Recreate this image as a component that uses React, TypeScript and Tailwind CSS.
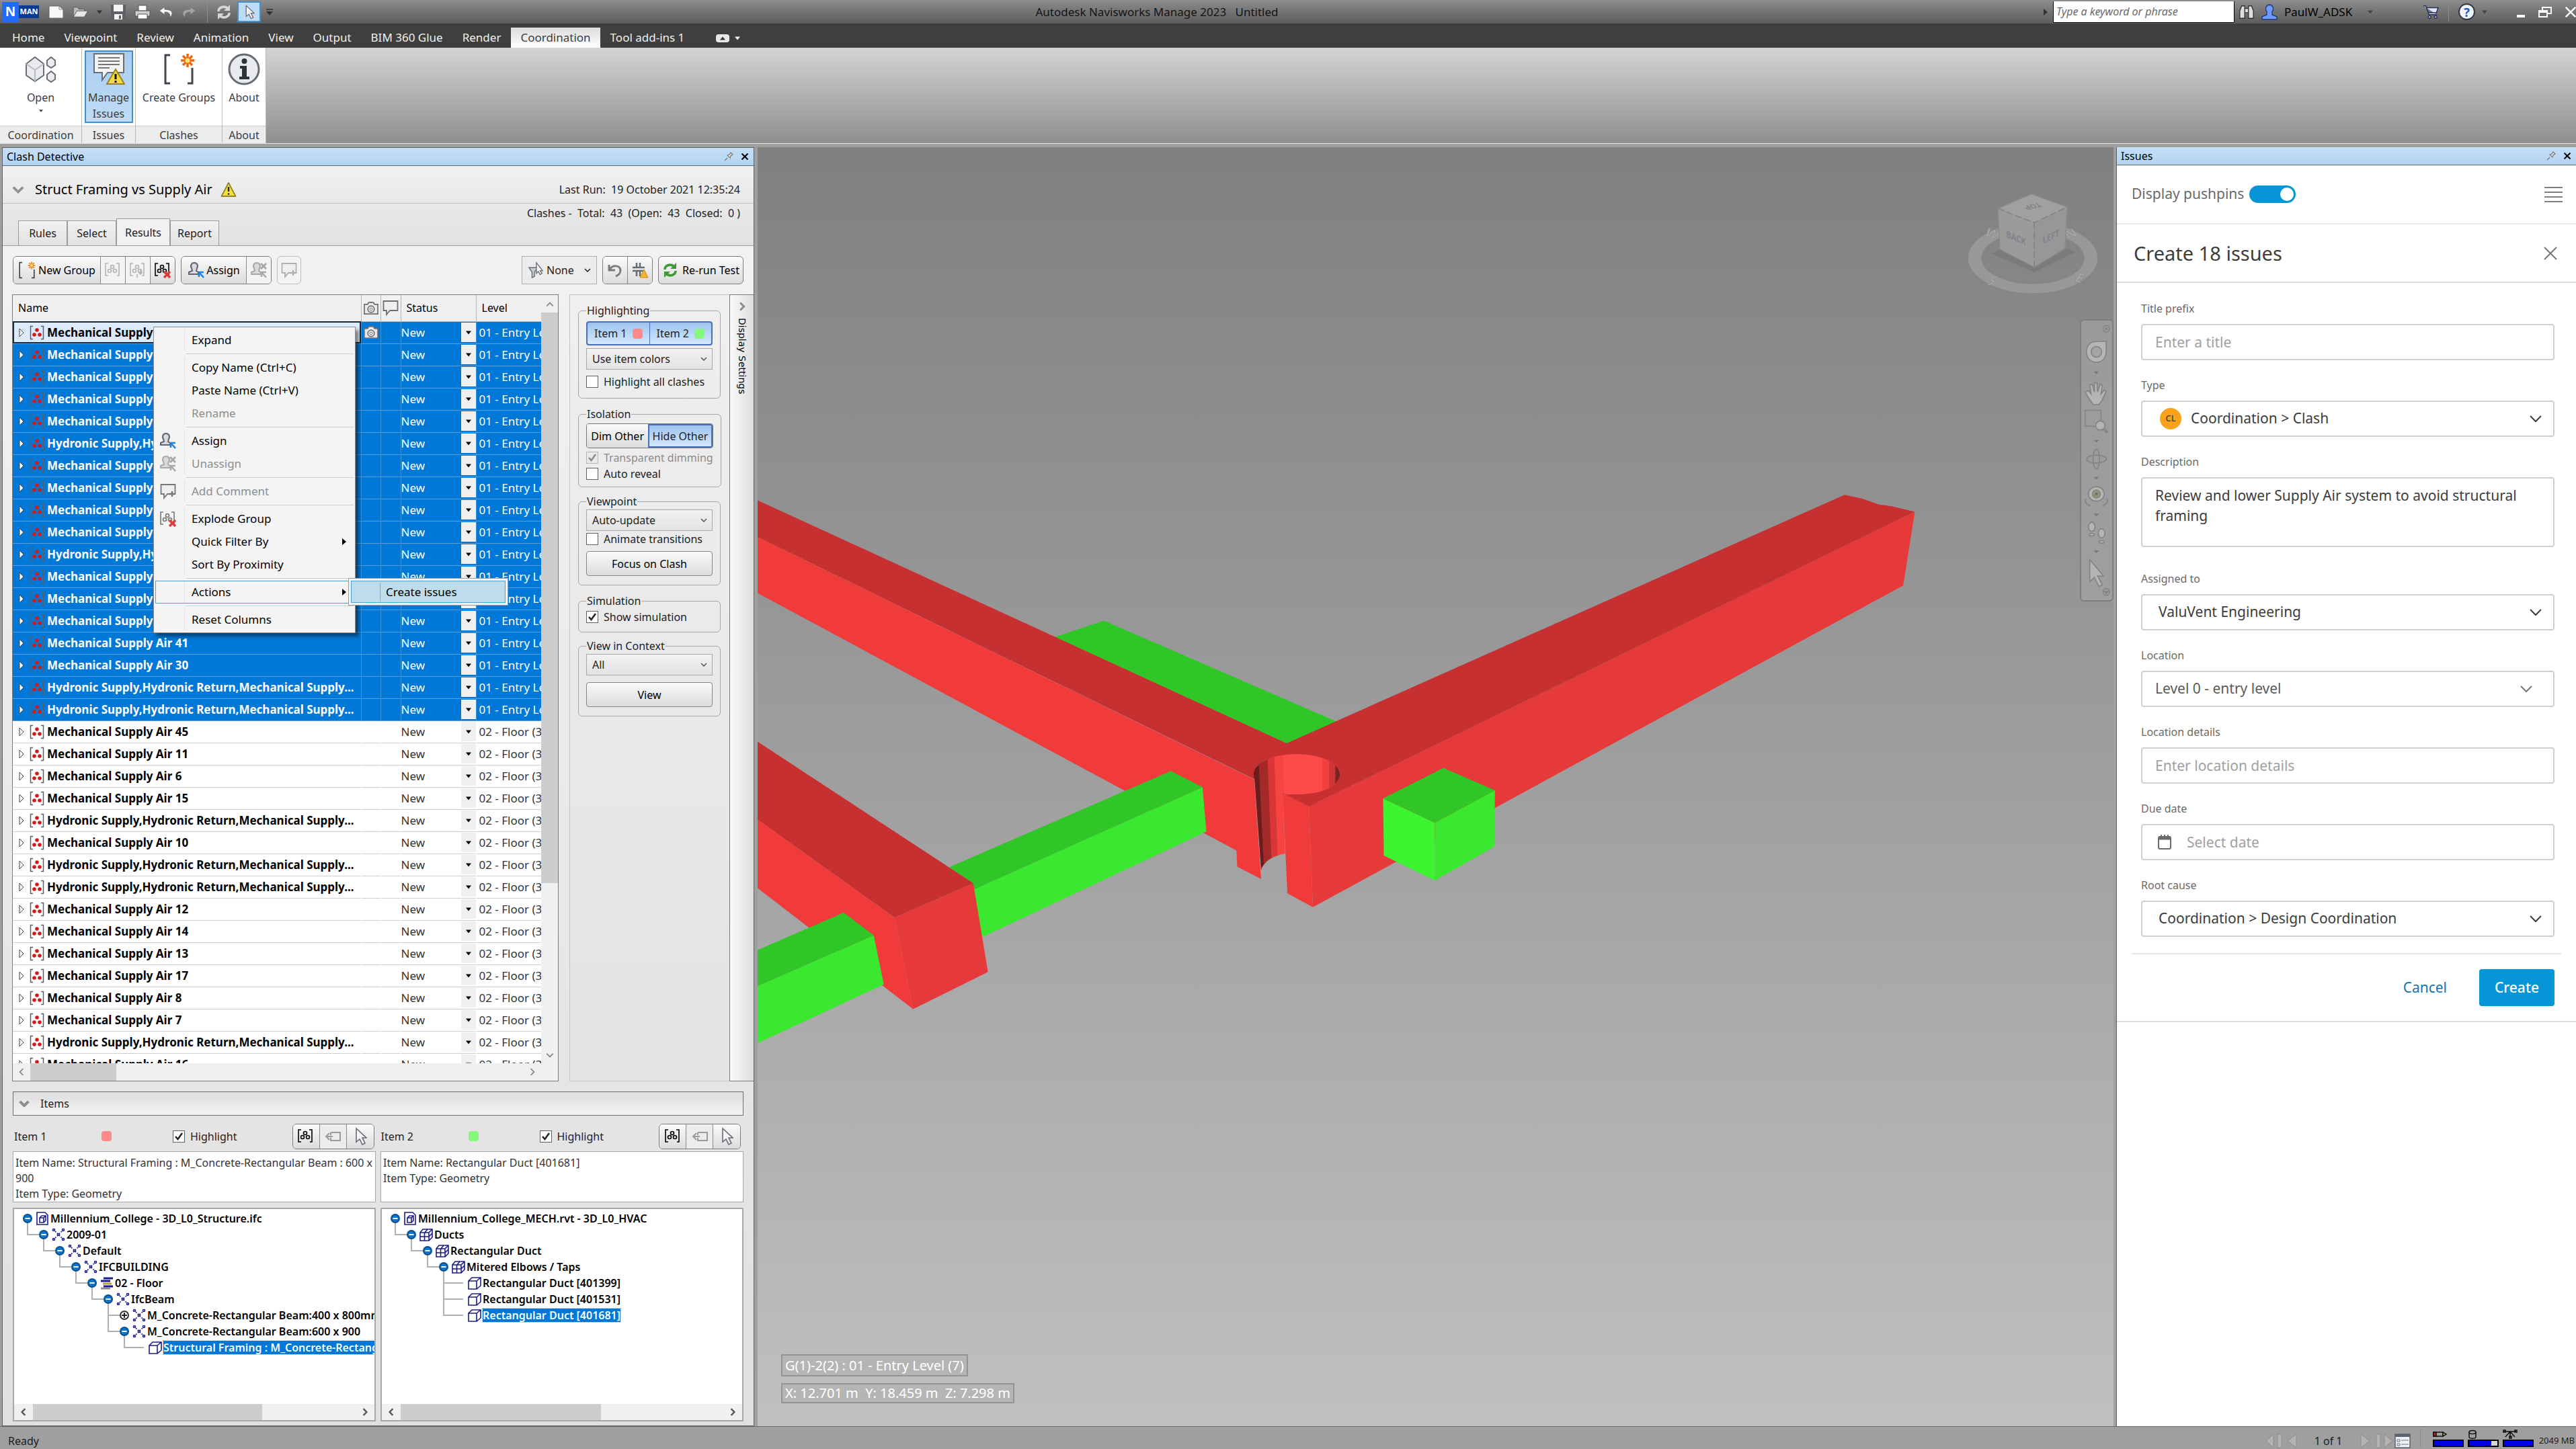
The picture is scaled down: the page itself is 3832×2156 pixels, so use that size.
import { useState, type ReactNode } from 'react';
import clsx from 'clsx';

const menuTabs = ['Home', 'Viewpoint', 'Review', 'Animation', 'View', 'Output', 'BIM 360 Glue', 'Render', 'Coordination', 'Tool add-ins 1'];

const air = 'Mechanical Supply Air ';
const hydronic = 'Hydronic Supply,Hydronic Return,Mechanical Supply...';

const entryLevel = [
	air + '1', air + '2', air + '3', air + '4', air + '5', hydronic,
	air + '18', air + '19', air + '20', air + '21', hydronic,
	air + '22', air + '23', air + '24', air + '41', air + '30', hydronic, hydronic,
];

const floorLevel = [
	air + '45', air + '11', air + '6', air + '15', hydronic, air + '10', hydronic, hydronic,
	air + '12', air + '14', air + '13', air + '17', air + '8', air + '7', hydronic, air + '16',
];

type Glyph = 'file' | 'nodes' | 'floor' | 'group' | 'box';

type TreeRow = {
	depth: number;
	label: string;
	glyph: Glyph;
	toggle?: 'minus' | 'plus';
	more?: boolean;
	selected?: boolean;
};

const structureTree: TreeRow[] = [
	{ depth: 0, label: 'Millennium_College - 3D_L0_Structure.ifc', glyph: 'file', toggle: 'minus' },
	{ depth: 1, label: '2009-01', glyph: 'nodes', toggle: 'minus' },
	{ depth: 2, label: 'Default', glyph: 'nodes', toggle: 'minus' },
	{ depth: 3, label: 'IFCBUILDING', glyph: 'nodes', toggle: 'minus' },
	{ depth: 4, label: '02 - Floor', glyph: 'floor', toggle: 'minus' },
	{ depth: 5, label: 'IfcBeam', glyph: 'nodes', toggle: 'minus' },
	{ depth: 6, label: 'M_Concrete-Rectangular Beam:400 x 800mm', glyph: 'nodes', toggle: 'plus', more: true },
	{ depth: 6, label: 'M_Concrete-Rectangular Beam:600 x 900', glyph: 'nodes', toggle: 'minus' },
	{ depth: 7, label: 'Structural Framing : M_Concrete-Rectangular Beam', glyph: 'box', selected: true },
];

const ductTree: TreeRow[] = [
	{ depth: 0, label: 'Millennium_College_MECH.rvt - 3D_L0_HVAC', glyph: 'file', toggle: 'minus' },
	{ depth: 1, label: 'Ducts', glyph: 'group', toggle: 'minus' },
	{ depth: 2, label: 'Rectangular Duct', glyph: 'group', toggle: 'minus' },
	{ depth: 3, label: 'Mitered Elbows / Taps', glyph: 'group', toggle: 'minus' },
	{ depth: 4, label: 'Rectangular Duct [401399]', glyph: 'box', more: true },
	{ depth: 4, label: 'Rectangular Duct [401531]', glyph: 'box', more: true },
	{ depth: 4, label: 'Rectangular Duct [401681]', glyph: 'box', selected: true },
];

/* ---------- icons ---------- */

const Warning = ({ className }: { className: string }) => (
	<svg viewBox="0 0 24 24" className={className}>
		<path d="M12 2 22.5 22H1.5Z" fill="#f7df3c" stroke="#8f8430" strokeWidth="1.8" strokeLinejoin="round" />
		<path d="M12 8v7M12 17.5v2.2" stroke="#222" strokeWidth="2.4" />
	</svg>
);

const Chevron = ({ className, width = 2 }: { className: string; width?: number }) => (
	<svg viewBox="0 0 20 12" className={className} fill="none" stroke="currentColor" strokeWidth={width}>
		<path d="M2 2 10 10 18 2" />
	</svg>
);

const Down = ({ className = 'h-1.5 w-2.5' }: { className?: string }) => (
	<svg viewBox="0 0 10 6" className={className} fill="currentColor"><path d="M0 0h10L5 6Z" /></svg>
);

const Cursor = ({ className = 'h-7 w-5' }: { className?: string }) => (
	<svg viewBox="0 0 20 28" className={className}>
		<path d="M4 2v20l5-4 4 8 4-2-4-8h6Z" fill="#f4f4f4" stroke="#666b73" strokeWidth="1.6" />
	</svg>
);

const ClashGroup = () => (
	<svg viewBox="0 0 22 22" className="h-[22px] w-[22px]">
		<path d="M5 1.5H1.5v19H5M17 1.5h3.5v19H17" fill="none" stroke="#5b6068" strokeWidth="1.5" />
		<g fill="#d11a1a">
			<circle cx="11" cy="7" r="2.8" />
			<circle cx="7" cy="14" r="2.8" />
			<circle cx="15" cy="14" r="2.8" />
		</g>
	</svg>
);

const OutlineGroup = ({ kind = 'plain' }: { kind?: 'plain' | 'add' | 'remove' }) => (
	<svg viewBox="0 0 26 26" className="h-[26px] w-[26px]" fill="none" stroke="currentColor" strokeWidth="1.6">
		<path d="M6 3H2v18h4M18 3h4v18h-3" />
		<circle cx="12" cy="8" r="2.5" />
		<circle cx="8" cy="14" r="2.5" />
		<circle cx="16" cy="14" r="2.5" />
		{kind === 'add' && <path d="M17 12v7m-3-3 3 3 3-3M12 19v5" />}
		{kind === 'remove' && <path d="m15 15 9 9m0-9-9 9" stroke="#dc3c3c" strokeWidth="3.5" />}
	</svg>
);

const Person = ({ off }: { off?: boolean }) => (
	<svg viewBox="0 0 26 26" className="h-[26px] w-[26px]">
		<path d="M10 2a5 5 0 0 1 4 8l-1 4 3 2v3H2v-3l5-2-1-4a5 5 0 0 1 4-8Z" fill="#d7dade" stroke={off ? '#a9a9a9' : '#5f6670'} strokeWidth="2" />
		<path d="M16 16h8M17 15v8M17 16l7 8" stroke={off ? '#a9a9a9' : '#2484d8'} strokeWidth="2.6" fill="none" />
		{off && <path d="m16 3 8 8m0-8-8 8" stroke="#a9a9a9" strokeWidth="3" />}
	</svg>
);

const Comment = ({ plus, className = 'h-6 w-6' }: { plus?: boolean; className?: string }) => (
	<svg viewBox="0 0 24 24" className={className} fill="#efefef" stroke="currentColor" strokeWidth="1.8">
		<path d="M1.5 2h21v14H11l-5 6v-6H1.5Z" />
		{plus && <path d="M18 12v8m-4-4h8" strokeWidth="2.4" />}
	</svg>
);

const Camera = () => (
	<svg viewBox="0 0 24 22" className="h-[21px] w-6" fill="#e9e9e9" stroke="#6d7076" strokeWidth="1.8">
		<path d="M1.5 5h5l2-3h7l2 3h5v15h-21Z" />
		<circle cx="12" cy="12.5" r="5" />
		<circle cx="12" cy="12.5" r="2" fill="#fff" strokeWidth="1" />
	</svg>
);

const BracketStar = ({ className, star }: { className: string; star: string }) => (
	<svg viewBox="0 0 48 48" className={className} fill="none">
		<path d="M11 3H4v42h7M37 45h7V22" stroke="#3f454d" strokeWidth="3" />
		<path d="M37 1v20M27 11h20M30 4l14 14M44 4 30 18" stroke={star} strokeWidth="3.5" />
		<circle cx="37" cy="11" r="3.5" fill="#ffe27a" />
	</svg>
);

const Reload = ({ className }: { className: string }) => (
	<svg viewBox="0 0 24 24" className={className} fill="none" stroke="currentColor" strokeWidth="3.6">
		<path d="M4 11c0-6 8-9 13-5M20 13c0 6-8 9-13 5" />
		<path d="M21 1v9h-9ZM3 23v-9h9Z" fill="currentColor" stroke="none" />
	</svg>
);

const Pin = () => (
	<svg viewBox="0 0 14 14" className="h-3.5 w-3.5" fill="#e4e4e4" stroke="#777" strokeWidth="1.2">
		<path d="m1 13 4-4M5 5l4 4 1-3 3-2-3-3-2 3Z" />
	</svg>
);

const Cross = ({ className, width = 2 }: { className: string; width?: number }) => (
	<svg viewBox="0 0 20 20" className={className} stroke="currentColor" strokeWidth={width}>
		<path d="M1 1l18 18M19 1 1 19" />
	</svg>
);

/* ---------- shared controls ---------- */

const Separator = ({ className }: { className: string }) => <span className={clsx('w-px bg-[#8e8e8e]', className)} />;

const PanelTitle = ({ children }: { children: ReactNode }) => (
	<header className="flex h-[27px] shrink-0 items-center gap-3 border-b border-[#5c6b7a] bg-linear-to-b from-[#c6dff8] to-[#b3d3f2] pr-2 pl-1.5 text-black">
		<h2 className="flex-1 text-base">{children}</h2>
		<button aria-label="Auto hide"><Pin /></button>
		<button aria-label="Close panel"><Cross className="h-2.5 w-2.5" width={4} /></button>
	</header>
);

const Check = ({ id, label, defaultChecked, disabled }: { id: string; label: string; defaultChecked?: boolean; disabled?: boolean }) => (
	<div className={clsx('flex items-center gap-2 whitespace-nowrap', disabled && 'text-[#8b8b8b]')}>
		<span className="grid">
			<input
				id={id}
				type="checkbox"
				defaultChecked={defaultChecked}
				disabled={disabled}
				className="peer col-start-1 row-start-1 h-[18px] w-[18px] appearance-none border border-[#5f5f5f] bg-white disabled:border-[#b5b5b5] disabled:bg-[#e9e9e9]"
			/>
			<svg viewBox="0 0 18 18" className="pointer-events-none invisible col-start-1 row-start-1 h-[18px] w-[18px] peer-checked:visible" fill="none" stroke="currentColor" strokeWidth="2.5">
				<path d="m4 9 3.5 4L14 4" />
			</svg>
		</span>
		<label htmlFor={id}>{label}</label>
	</div>
);

const Drop = ({ id, label, value, className }: { id: string; label: string; value: string; className: string }) => (
	<div className="grid items-center">
		<select
			id={id}
			aria-label={label}
			className={clsx('col-start-1 row-start-1 w-full appearance-none border border-[#a8a8a8] bg-linear-to-b from-[#f2f2f2] to-[#e3e3e3] pr-6', className)}
		>
			<option>{value}</option>
		</select>
		<Chevron className="pointer-events-none col-start-1 row-start-1 mr-2 h-1.5 w-2.5 justify-self-end text-[#555]" width={3} />
	</div>
);

const buttonFace = 'flex items-center justify-center bg-linear-to-b from-[#fafafa] to-[#dcdcdc] text-black';

const Frame = ({ title, children, className }: { title: string; children: ReactNode; className: string }) => (
	<fieldset className={clsx('rounded-md border border-[#a6a6a6] px-[11px]', className)}>
		<legend className="px-px leading-6">{title}</legend>
		{children}
	</fieldset>
);

/* ---------- title bar and ribbon ---------- */

const TitleBar = () => (
	<header className="flex h-[35px] shrink-0 items-center bg-linear-to-b from-[#8d8d8d] to-[#5c5c5c] text-black">
		<div className="flex w-[40.2%] items-center text-white">
			<span className="ml-[3px] flex h-[30px] w-[25px] items-center justify-center bg-[#1f6bff] text-[19px] font-bold">N</span>
			<span className="flex h-[19px] w-[30px] items-center justify-center bg-[#0b3a94] text-[11px] font-bold">MAN</span>
			<div className="ml-3.5 flex items-center gap-3">
				<button aria-label="New">
					<svg viewBox="0 0 24 20" className="h-5 w-6"><path d="M1 1h15l6 5v13H1Z" fill="#f7f7f7" stroke="#666" /><path d="M16 1v5h6" fill="none" stroke="#888" /></svg>
				</button>
				<button aria-label="Open file">
					<svg viewBox="0 0 26 20" className="h-[18px] w-6" stroke="#555"><path d="M1 17V2h7l2 3h9v3" fill="#bbb" /><path d="m1 18 6-10h18l-6 10Z" fill="#e6e6e6" /></svg>
				</button>
				<button aria-label="Open options" className="text-[#333]"><Down className="h-1.5 w-2" /></button>
				<button aria-label="Save">
					<svg viewBox="0 0 24 24" className="h-6 w-6"><path d="M1 1h22v22H1Z" fill="#5e6268" /><path d="M5 1h14v10H5ZM6 15h12v8H6Z" fill="#f3f3f3" /><path d="M13 17h3v5h-3Z" fill="#5e6268" /></svg>
				</button>
				<button aria-label="Print">
					<svg viewBox="0 0 24 22" className="h-[22px] w-6" stroke="#555"><path d="M6 1h12v8H6Z" fill="#fff" /><path d="M1 9h22v8H1Z" fill="#cfcfcf" /><path d="M5 14h14v7H5Z" fill="#fff" /></svg>
				</button>
				<button aria-label="Undo">
					<svg viewBox="0 0 22 18" className="h-[18px] w-[22px]"><path d="M9 1 1 7l8 6V9c6 0 8 2 8 8 6-7 3-12-8-12Z" fill="#f4f4f4" stroke="#666" /></svg>
				</button>
				<button aria-label="Redo">
					<svg viewBox="0 0 22 18" className="h-[18px] w-[22px]"><path d="m13 1 8 6-8 6V9c-6 0-8 2-8 8-6-7-3-12 8-12Z" fill="#a3a3a3" stroke="#777" /></svg>
				</button>
			</div>
			<Separator className="ml-4 h-8" />
			<button aria-label="Refresh" className="ml-3 text-[#d6d6d6]"><Reload className="h-6 w-6" /></button>
			<button aria-label="Select" className="ml-2 flex h-[31px] w-[35px] items-center justify-center border-2 border-[#3f8fd6] bg-[#bfdcf6]"><Cursor className="h-6 w-4" /></button>
			<button aria-label="Customize toolbar" className="ml-2 border-t-2 border-[#444] pt-0.5 text-[#333]"><Down /></button>
		</div>
		<h1 className="whitespace-pre text-[17px] text-[#141414]">Autodesk Navisworks Manage 2023   Untitled</h1>
		<div className="flex flex-1 items-center justify-end">
			<svg viewBox="0 0 6 10" className="mr-2 h-2.5 w-1.5"><path d="M0 0l6 5-6 5Z" fill="#333" /></svg>
			<input aria-label="Search" placeholder="Type a keyword or phrase" className="h-8 w-[270px] border border-t-0 border-black bg-white px-1 text-base italic placeholder:text-[#6a6a6a]" />
			<button aria-label="Find" className="ml-1.5">
				<svg viewBox="0 0 26 24" className="h-6 w-6" fill="#dedede" stroke="#333" strokeWidth="1.5"><path d="M2 10 5 2h5v20H2ZM24 10l-3-8h-5v20h8ZM10 6h6v7h-6Z" /></svg>
			</button>
			<button className="ml-2.5 flex items-center gap-2.5">
				<svg viewBox="0 0 24 24" className="h-6 w-6" fill="#6f9bff" stroke="#1f3574" strokeWidth="1.3"><path d="M12 1a6 6 0 0 1 4 10v5l7 3v4H1v-4l7-3v-5a6 6 0 0 1 4-10Z" /></svg>
				<span className="w-[104px] text-left text-[17px]">PaulW_ADSK</span>
			</button>
			<span className="ml-5 text-[#444]"><Down className="h-1.5 w-2" /></span>
			<button aria-label="App store" className="ml-[74px]">
				<svg viewBox="0 0 26 24" className="h-[22px] w-6" fill="#e1e5f2" stroke="#25305f" strokeWidth="1.6"><path d="M1 2h4l5 14h13M6 5h19l-3 8H9" /><circle cx="11" cy="20" r="2" /><circle cx="21" cy="20" r="2" /></svg>
			</button>
			<Separator className="mx-3.5 h-7" />
			<button aria-label="Help" className="flex h-[25px] w-[25px] items-center justify-center rounded-full border-2 border-[#33373f] bg-[#f2f5fb] text-lg font-bold text-[#2255c4]">?</button>
			<span className="mr-11 ml-2.5 text-[#444]"><Down className="h-1.5 w-2" /></span>
			<button aria-label="Minimize" className="h-[17px] w-3 border-b-4 border-white" />
			<button aria-label="Restore" className="mx-5 text-white">
				<svg viewBox="0 0 20 18" className="h-[18px] w-5" fill="none" stroke="currentColor" strokeWidth="2"><path d="M1 7h12v9H1ZM1 9h12M6 6V2h13v9h-5" /></svg>
			</button>
			<button aria-label="Close" className="text-white"><Cross className="h-4 w-4" width={3} /></button>
		</div>
	</header>
);

const MenuTabs = () => (
	<nav className="flex h-9 shrink-0 items-end gap-px bg-[#3f3f3f] pl-1 text-[17px] text-[#f0f0f0]">
		{menuTabs.map((tab) => (
			<a
				key={tab}
				href="#"
				className={clsx('flex h-[30px] items-center px-[14px]', tab === 'Coordination' && 'bg-linear-to-b from-[#dcdcdc] to-white text-[#3c3c3c]')}
			>
				{tab}
			</a>
		))}
		<button aria-label="Ribbon display" className="mb-2 ml-8 flex items-center gap-2">
			<span className="flex h-3 w-5 items-center justify-center rounded-sm bg-[#e8e8e8]">
				<svg viewBox="0 0 10 6" className="h-1.5 w-2"><path d="M0 6h10L5 0Z" fill="#333" /></svg>
			</span>
			<Down className="h-1.5 w-2" />
		</button>
	</nav>
);

const RibbonGroup = ({ title, width, children }: { title: string; width: string; children: ReactNode }) => (
	<section className={clsx('flex flex-col border-r border-[#b9b9b9] bg-white', width)}>
		<div className="flex flex-1 justify-center pt-1">{children}</div>
		<h3 className="flex h-[26px] items-center justify-center border-t border-[#c9c9c9] bg-[#ececec]">{title}</h3>
	</section>
);

const Ribbon = () => (
	<div className="flex h-[142px] shrink-0 bg-linear-to-b from-[#d4d4d4] to-[#8f8f8f] text-base leading-6 text-[#3c3c3c]">
		<RibbonGroup title="Coordination" width="w-[122px]">
			<button className="flex flex-col items-center pt-1">
				<svg viewBox="0 0 48 48" className="mb-1.5 h-12 w-12" fill="#e9ebee" stroke="#6a6e75" strokeWidth="2">
					<path d="M2 16 15 6l13 10v17L15 42 2 33Z" />
					<path d="M2 16 15 25 28 16M15 25v17" stroke="#b8bbc0" />
					<path d="m39 6 6 5v7l-6 4-6-4v-7ZM39 27l6 5v7l-6 4-6-4v-7Z" />
				</svg>
				Open
				<Down className="mt-1.5 h-1 w-1.5" />
			</button>
		</RibbonGroup>
		<RibbonGroup title="Issues" width="w-[80px]">
			<button className="flex h-[108px] w-[72px] flex-col items-center border-2 border-[#3f8fd6] bg-linear-to-b from-[#a9cdf0] to-[#bfdcf7]">
				<svg viewBox="0 0 48 50" className="h-[50px] w-12 shrink-0">
					<path d="M2 3h44v28H22L14 42V31H2Z" fill="#f4f4f4" stroke="#6a6e75" strokeWidth="2" />
					<path d="M8 9h32M8 14h32M8 19h32M8 24h17" stroke="#777" strokeWidth="2" />
					<path d="m34 26 13 22H21Z" fill="#f7d93c" stroke="#9a861e" strokeWidth="2" />
					<path d="M34 33v8M34 43v3" stroke="#111" strokeWidth="3" />
				</svg>
				<span className="mt-1.5">Manage<br />Issues</span>
			</button>
		</RibbonGroup>
		<RibbonGroup title="Clashes" width="w-[129px]">
			<button className="flex flex-col items-center whitespace-nowrap pt-1">
				<BracketStar className="mb-1.5 h-12 w-12" star="#f0650f" />
				Create Groups
			</button>
		</RibbonGroup>
		<RibbonGroup title="About" width="w-[65px]">
			<button className="flex flex-col items-center pt-1">
				<svg viewBox="0 0 48 48" className="mb-1.5 h-12 w-12">
					<circle cx="24" cy="24" r="22" fill="#e8eaed" stroke="#666b73" strokeWidth="3" />
					<path d="M18 19h10v16h4v4H17v-4h4V23h-3Z" fill="#2e333b" />
					<circle cx="24.5" cy="12" r="4" fill="#2e333b" />
				</svg>
				About
			</button>
		</RibbonGroup>
	</div>
);

/* ---------- clash detective ---------- */

const ClashHeading = () => (
	<div className="shrink-0 text-base">
		<div className="flex h-14 items-center border-b border-[#c2c2c2] bg-linear-to-b from-[#f1f1f1] to-[#e8e8e8] pt-3.5 pr-5 pl-3.5">
			<Chevron className="h-3 w-[18px] text-[#909090]" width={4} />
			<h2 className="ml-4 text-xl text-black">Struct Framing vs Supply Air</h2>
			<Warning className="ml-3 h-6 w-6" />
			<p className="ml-auto whitespace-pre">Last Run:  19 October 2021 12:35:24</p>
		</div>
		<div className="flex h-[63px] justify-between border-b border-[#9d9d9d] bg-linear-to-b from-[#e8e8e8] to-[#e2e2e2] pr-5 pl-[23px]">
			<div className="flex items-end">
				{['Rules', 'Select', 'Results', 'Report'].map((tab) => (
					<button
						key={tab}
						className={clsx(
							'border border-b-0 border-[#9a9a9a] text-center',
							tab === 'Results' ? 'h-10 w-20 bg-[#f1f1f1]' : 'h-[37px] w-[73px] bg-linear-to-b from-[#f1f1f1] to-[#e2e2e2]',
						)}
					>
						{tab}
					</button>
				))}
			</div>
			<p className="pt-0.5 whitespace-pre">Clashes -  Total:  43  (Open:  43  Closed:  0 )</p>
		</div>
	</div>
);

const ClashToolbar = () => (
	<div className="flex h-[72px] shrink-0 items-center gap-2 px-[15px] text-base">
		<div className="flex h-[42px] divide-x divide-[#8a8a8a] overflow-hidden rounded-md border border-[#7d7d7d]">
			<button className={clsx(buttonFace, 'w-[130px] gap-1 whitespace-nowrap')}><BracketStar className="h-[26px] w-[26px]" star="#f08a24" />New Group</button>
			<button aria-label="Group" className="flex w-[37px] items-center justify-center bg-[#f3f3f3] text-[#b5b5b5]"><OutlineGroup /></button>
			<button aria-label="Remove from group" className="flex w-[37px] items-center justify-center bg-[#f3f3f3] text-[#b5b5b5]"><OutlineGroup kind="add" /></button>
			<button aria-label="Explode group" className={clsx(buttonFace, 'w-9')}><OutlineGroup kind="remove" /></button>
		</div>
		<div className="flex h-[42px] divide-x divide-[#8a8a8a] overflow-hidden rounded-md border border-[#7d7d7d]">
			<button className={clsx(buttonFace, 'w-[97px] gap-0.5')}><Person />Assign</button>
			<button aria-label="Unassign" className="flex w-9 items-center justify-center bg-[#f3f3f3]"><Person off /></button>
		</div>
		<button aria-label="Add comment" className="flex h-[42px] w-9 items-center justify-center rounded-md border border-[#bdbdbd] bg-[#f3f3f3] text-[#b0b0b0]"><Comment plus /></button>
		<div className="ml-auto flex items-center border border-[#b0b0b0] bg-[#ececec] pl-2">
			<svg viewBox="0 0 26 28" className="h-7 w-6" stroke="#666b73" strokeWidth="1.5"><path d="M2 10h14l-5 7v7l-4 2v-9Z" fill="#c9cdd2" /><path d="M14 2v17l3-3 3 5 3-2-3-4h4Z" fill="#fff" /></svg>
			<div className="grid w-[78px] items-center">
				<select aria-label="Filter" className="col-start-1 row-start-1 h-10 appearance-none pl-1"><option>None</option></select>
				<Chevron className="pointer-events-none col-start-1 row-start-1 mr-2 h-1.5 w-2.5 justify-self-end" width={3} />
			</div>
		</div>
		<div className="flex h-[42px] divide-x divide-[#8a8a8a] overflow-hidden rounded-md border border-[#7d7d7d]">
			<button aria-label="Reset" className={clsx(buttonFace, 'w-[37px]')}>
				<svg viewBox="0 0 24 24" className="h-6 w-6" fill="none" stroke="#777b82" strokeWidth="3"><path d="M3 4v8h9M4 11C8 4 19 4 20 12c0 5-4 8-7 9" /></svg>
			</button>
			<button aria-label="Compact" className={clsx(buttonFace, 'w-9')}>
				<svg viewBox="0 0 26 26" className="h-[26px] w-[26px]"><path d="M2 9h18M2 14h18M8 2v6M13 2v6M8 15v7M13 15v7" stroke="#666b73" strokeWidth="2.5" /><path d="m19 12 6 12H13Z" fill="#f5b52e" stroke="#c98a11" /></svg>
			</button>
		</div>
		<button className={clsx(buttonFace, 'h-[42px] w-[127px] gap-1.5 whitespace-nowrap rounded-md border border-[#7d7d7d]')}>
			<Reload className="h-6 w-6 text-[#3f9a35]" />
			Re-run Test
		</button>
	</div>
);

const ResultRow = ({ name, index, selected }: { name: string; index: number; selected?: boolean }) => {
	const current = selected && index === 0;

	return (
		<tr className={clsx('h-[33px] border-b', selected ? 'border-[#5a9fdc] bg-[#0078d7] text-white' : 'border-[#cfcfcf] bg-white text-[#333]')}>
			<td className={clsx('overflow-hidden p-0', current ? 'bg-[#dcebfc] text-black outline-2 -outline-offset-2 outline-[#1b2a3c]' : selected ? 'text-white' : 'text-black')}>
				<div className="flex items-center pl-[9px] whitespace-nowrap">
					<svg viewBox="0 0 8 14" className="mr-2 h-3.5 w-2"><path d="M1 1l6 6-6 6Z" fill="#fff" stroke="#444" /></svg>
					<ClashGroup />
					<span className="ml-1 font-bold">{name}</span>
				</div>
			</td>
			<td className={clsx('border-l p-0', selected ? 'border-[#3d94dd]' : 'border-transparent')}>{current && <div className="flex justify-center"><Camera /></div>}</td>
			<td className={clsx('border-x p-0', selected ? 'border-[#3d94dd]' : 'border-transparent')} />
			<td className="p-0">
				<div className="flex h-8 items-center justify-between">
					New
					<button aria-label="Status list" className="flex h-[29px] w-[22px] items-center justify-center bg-[#f0f0f0] text-black"><Down className="h-1.5 w-2" /></button>
				</div>
			</td>
			<td className={clsx('overflow-hidden border-l p-0 pl-1 whitespace-nowrap', selected ? 'border-[#3d94dd]' : 'border-transparent')}>
				{selected ? '01 - Entry Level (7)' : '02 - Floor (3)'}
			</td>
		</tr>
	);
};

const ResultsTable = () => (
	<div className="flex h-full flex-col border border-[#7b7b7b] bg-white">
		<div className="flex min-h-0 flex-1">
			<div className="min-w-0 flex-1 overflow-hidden">
				<table className="w-full table-fixed border-collapse text-[17px]">
					<thead>
						<tr className="h-[39px] bg-[#f0f0f0] text-left text-base text-black">
							<th className="border-b border-[#777] p-0 pl-2 font-normal">Name</th>
							<th aria-label="Viewpoint" className="w-[29px] border-b border-l border-[#b5b5b5] p-0 pl-0.5"><Camera /></th>
							<th aria-label="Comments" className="w-[30px] border-x border-b border-[#b5b5b5] p-0 pl-0.5 text-[#6d7076]"><Comment /></th>
							<th className="w-28 border-b border-[#b5b5b5] p-0 pl-2 font-normal">Status</th>
							<th className="w-[97px] border-b border-l border-[#b5b5b5] p-0 pl-2 font-normal">Level</th>
						</tr>
					</thead>
					<tbody>
						{entryLevel.map((name, i) => <ResultRow key={i} name={name} index={i} selected />)}
						{floorLevel.map((name, i) => <ResultRow key={i} name={name} index={i} />)}
					</tbody>
				</table>
			</div>
			<div className="flex w-[25px] flex-col items-center bg-[#f0f0f0] text-[#8a8a8a]">
				<Chevron className="mt-2.5 mb-2 h-2 w-3 rotate-180" width={3} />
				<div className="h-[849px] w-full bg-[#cdcdcd]" />
				<Chevron className="mt-auto mb-2 h-2 w-3" width={3} />
			</div>
		</div>
		<div className="flex h-[26px] items-center bg-[#f0f0f0] text-[#8a8a8a]">
			<Chevron className="mx-[7px] h-2 w-3 rotate-90" width={3} />
			<div className="h-full w-32 bg-[#cdcdcd]" />
			<Chevron className="mr-8 ml-auto h-2 w-3 -rotate-90" width={3} />
		</div>
	</div>
);

const menuGroups: { label: string; icon?: ReactNode; off?: boolean; sub?: boolean }[][] = [
	[{ label: 'Expand' }],
	[{ label: 'Copy Name (Ctrl+C)' }, { label: 'Paste Name (Ctrl+V)' }, { label: 'Rename', off: true }],
	[{ label: 'Assign', icon: <Person /> }, { label: 'Unassign', icon: <Person off />, off: true }],
	[{ label: 'Add Comment', icon: <Comment plus />, off: true }],
	[{ label: 'Explode Group', icon: <OutlineGroup kind="remove" /> }, { label: 'Quick Filter By', sub: true }, { label: 'Sort By Proximity' }],
	[{ label: 'Actions', sub: true }],
	[{ label: 'Reset Columns' }],
];

const ContextMenu = () => (
	<div className="absolute top-12 left-[224px] z-10 w-[301px] border border-[#8d8d8d] bg-[#f4f4f4] p-0.5 text-[17px] text-black shadow-[5px_5px_5px_rgba(0,0,0,0.45)]">
		{menuGroups.map((group, g) => (
			<div key={g}>
				{g > 0 && <div className="flex h-[7px] items-center"><span className="ml-[46px] h-px flex-1 bg-[#cfcfcf]" /></div>}
				{group.map((item) => (
					<div key={item.label} className="relative">
						<button
							className={clsx(
								'flex h-[34px] w-full items-center border text-left',
								item.label === 'Actions' ? 'border-[#4aa3d8]' : 'border-transparent',
								item.off && 'text-[#8d8d8d]',
							)}
						>
							<span className="flex h-full w-[43px] items-center justify-center border-r border-[#e2e2e2] pr-1.5 text-[#777]">{item.icon}</span>
							<span className="ml-2.5 flex-1">{item.label}</span>
							{item.sub && <svg viewBox="0 0 6 10" className="mr-2.5 h-2.5 w-1.5"><path d="M0 0l6 5-6 5Z" /></svg>}
						</button>
						{item.label === 'Actions' && (
							<div className="absolute -top-1 left-[287px] w-[238px] border border-[#9a9a9a] bg-[#f4f4f4] p-[3px]">
								<button className="flex h-[33px] w-full items-center border border-[#4aa3d8] bg-[#bfdcea]">
									<span className="mr-2 ml-[42px] h-7 w-px bg-[#8fa9b5]" />
									Create issues
								</button>
							</div>
						)}
					</div>
				))}
			</div>
		))}
	</div>
);

const Swatch = ({ className }: { className: string }) => <span className={clsx('h-[15px] w-[15px] rounded-sm', className)} />;

const DisplaySettings = () => (
	<>
		<aside className="ml-4 w-[238px] border border-r-0 border-[#c6c6c6] bg-linear-to-b from-[#efefef] to-[#e3e3e3] pt-[11px] pr-[13px] pl-3 text-base leading-6 text-[#222]">
			<Frame title="Highlighting" className="h-[143px]">
				<div className="mt-1 flex h-9 overflow-hidden rounded-sm border-2 border-[#4b70b5] bg-linear-to-b from-[#9cc3ee] to-[#d3e9ff]">
					<button className="flex flex-1 items-center justify-center gap-2 border-r border-[#4b70b5]">Item 1 <Swatch className="bg-[#ff8a8a]" /></button>
					<button className="flex flex-1 items-center justify-center gap-2">Item 2 <Swatch className="bg-[#86f97c]" /></button>
				</div>
				<div className="mt-1 mb-1.5"><Drop id="colors" label="Item colors" value="Use item colors" className="h-8 pl-2" /></div>
				<Check id="highlight-all" label="Highlight all clashes" />
			</Frame>
			<Frame title="Isolation" className="mt-[11px] h-[121px]">
				<div className="mt-0.5 mb-0.5 flex h-[37px] overflow-hidden rounded-sm border border-[#777]">
					<button className={clsx(buttonFace, 'flex-1 whitespace-nowrap')}>Dim Other</button>
					<button className="flex-1 whitespace-nowrap border-2 border-[#4b70b5] bg-linear-to-b from-[#9cc3ee] to-[#d3e9ff]">Hide Other</button>
				</div>
				<Check id="transparent" label="Transparent dimming" defaultChecked disabled />
				<Check id="auto-reveal" label="Auto reveal" />
			</Frame>
			<Frame title="Viewpoint" className="mt-[9px] h-[137px]">
				<Drop id="viewpoint" label="Viewpoint" value="Auto-update" className="h-8 pl-2" />
				<Check id="animate" label="Animate transitions" />
				<button className={clsx(buttonFace, 'mt-1.5 h-[37px] w-full rounded-sm border border-[#858585]')}>Focus on Clash</button>
			</Frame>
			<Frame title="Simulation" className="mt-[11px] h-[59px]">
				<Check id="simulation" label="Show simulation" defaultChecked />
			</Frame>
			<Frame title="View in Context" className="mt-2 h-[117px]">
				<Drop id="context" label="View in context" value="All" className="h-8 pl-2" />
				<button className={clsx(buttonFace, 'mt-2.5 h-[37px] w-full rounded-sm border border-[#858585]')}>View</button>
			</Frame>
		</aside>
		<button className="flex w-9 flex-col items-center gap-3 border border-[#7b7b7b] border-r-0 bg-linear-to-r from-[#fafafa] to-[#dedede] pt-3 text-black">
			<Chevron className="h-2.5 w-3.5 -rotate-90 text-[#8a8a8a]" width={4} />
			<span className="font-['DejaVu_Sans'] text-sm [writing-mode:vertical-rl]">Display Settings</span>
		</button>
	</>
);

/* ---------- items ---------- */

const TreeGlyph = ({ kind }: { kind: Glyph }) => (
	<svg viewBox="0 0 20 20" className="h-5 w-5" fill="none" stroke="#1c1c8c" strokeWidth="1.6">
		{kind === 'file' && <path d="M2 1h12l4 4v14H2ZM6 9h6v7H6ZM6 9l3-3h6v7l-3 3M12 9l3-3" />}
		{kind === 'nodes' && (
			<>
				<path d="M5 5l10 10M15 5 5 15" strokeDasharray="2 2" />
				<circle cx="3" cy="3" r="1.5" /><circle cx="17" cy="3" r="1.5" /><circle cx="3" cy="17" r="1.5" /><circle cx="17" cy="17" r="1.5" /><circle cx="10" cy="10" r="1.5" />
			</>
		)}
		{kind === 'floor' && (
			<>
				<path d="M5 3h14M1 7h14M5 15h14" strokeWidth="3" />
				<path d="M4 11h13" stroke="#b3a52a" strokeWidth="3" />
				<path d="M1 18h14" stroke="#8d8d8d" strokeWidth="3" />
			</>
		)}
		{kind === 'group' && <path d="M1 7h13v12H1ZM1 13h13M7.5 7v12M1 7l4-5h14v12l-5 5M14 7l5-5M8 7l4-5M14 13l5-5" />}
		{kind === 'box' && <path d="M1 7h12v12H1ZM1 7l5-5h13v12l-6 5M13 7l6-5" />}
	</svg>
);

const Tree = ({ rows, thumb }: { rows: TreeRow[]; thumb: string }) => (
	<div className="flex h-[318px] min-w-0 flex-1 flex-col border-2 border-[#a8a8a8] bg-white">
		<ul className="flex-1 overflow-hidden pt-0.5 pl-2 text-base font-semibold text-black">
			{rows.map((row, i) => (
				<li key={i} className="flex h-6 items-center whitespace-nowrap">
					<span style={{ width: Math.max(0, row.depth - 1) * 24 }} className="shrink-0" />
					{row.depth > 0 && (
						<svg viewBox="0 0 24 24" className="h-6 w-6 shrink-0" fill="none" stroke="#b0b0b0" strokeWidth="2">
							<path d={row.more ? 'M12 0V24M12 12H24' : 'M12 0V12H24'} />
						</svg>
					)}
					<svg viewBox="0 0 24 24" className="h-6 w-6 shrink-0" fill="none" strokeWidth="2">
						<path d={row.toggle ? 'M0 12h6' : 'M0 12h17'} stroke={row.depth > 0 ? '#b0b0b0' : 'none'} />
						{row.toggle === 'minus' && <path d="M12 18v6" stroke="#b0b0b0" />}
						{row.toggle && <circle cx="12" cy="12" r="6" fill={row.toggle === 'minus' ? '#0b78d0' : '#fff'} stroke={row.toggle === 'minus' ? '#0a4f8c' : '#333'} />}
						{row.toggle && <path d={row.toggle === 'minus' ? 'M8.5 12h7' : 'M8 12h8M12 8v8'} stroke={row.toggle === 'minus' ? '#fff' : '#222'} />}
					</svg>
					<span className="mr-0.5 shrink-0"><TreeGlyph kind={row.glyph} /></span>
					<span className={clsx('leading-5', row.selected && 'outline-1 outline-dotted outline-[#f7a55a] bg-[#0078d7] text-white')}>{row.label}</span>
				</li>
			))}
		</ul>
		<div className="flex h-6 items-center bg-[#f0f0f0] text-[#555]">
			<Chevron className="mx-2 h-2 w-3 rotate-90" width={4} />
			<div className={clsx('h-full bg-[#cdcdcd]', thumb)} />
			<Chevron className="mr-2 ml-auto h-2 w-3 -rotate-90" width={4} />
		</div>
	</div>
);

const ItemHeader = ({ id, name, swatch }: { id: string; name: string; swatch: string }) => (
	<div className="flex min-w-0 flex-1 items-center">
		<span className="w-[132px] pl-0.5">{name}</span>
		<Swatch className={swatch} />
		<div className="ml-[91px]"><Check id={id} label="Highlight" defaultChecked /></div>
		<div className="ml-auto flex h-[38px] divide-x divide-[#8a8a8a] overflow-hidden rounded-md border border-[#7d7d7d]">
			<button aria-label="Group clashes" className={clsx(buttonFace, 'w-10')}><OutlineGroup /></button>
			<button aria-label="Back" className="flex w-10 items-center justify-center bg-[#ececec]">
				<svg viewBox="0 0 24 18" className="h-[18px] w-6" fill="none" stroke="#9a9a9a" strokeWidth="2"><path d="M9 3h14v12H9v-4M9 7V3M12 9H3m4-5L2 9l5 5" /></svg>
			</button>
			<button aria-label="Select item" className={clsx(buttonFace, 'w-10')}><Cursor /></button>
		</div>
	</div>
);

const Items = () => (
	<div className="shrink-0 px-[15px] pt-[15px] pb-1.5 text-base">
		<button className="flex h-9 w-full items-center gap-4 border border-[#6f6f6f] bg-linear-to-b from-[#dedede] to-[#f3f3f3] pl-2 text-left">
			<Chevron className="h-2.5 w-4 text-[#8d8d8d]" width={5} />
			Items
		</button>
		<div className="flex h-[53px] items-center gap-2 pt-2 pr-1">
			<ItemHeader id="item1" name="Item 1" swatch="bg-[#ff8a8a]" />
			<ItemHeader id="item2" name="Item 2" swatch="bg-[#86f97c]" />
		</div>
		<div className="mb-2 flex h-[76px] gap-[7px] leading-[23px] text-[#333]">
			<p className="flex-1 overflow-hidden border border-[#a8a8a8] bg-white py-[5px] pl-[3px]">
				Item Name: Structural Framing : M_Concrete-Rectangular Beam : 600 x 900<br />Item Type: Geometry
			</p>
			<p className="flex-1 overflow-hidden border border-[#a8a8a8] bg-white py-[5px] pl-[3px]">
				Item Name: Rectangular Duct [401681]<br />Item Type: Geometry
			</p>
		</div>
		<div className="flex gap-[7px]">
			<Tree rows={structureTree} thumb="w-[341px]" />
			<Tree rows={ductTree} thumb="w-[298px]" />
		</div>
	</div>
);

const ClashDetective = () => (
	<section className="ml-[3px] flex w-[1119px] shrink-0 flex-col border border-[#5f5f5f] bg-linear-to-b from-[#f3f3f3] to-[#e0e0e0] text-[#222]">
		<PanelTitle>Clash Detective</PanelTitle>
		<ClashHeading />
		<ClashToolbar />
		<div className="relative flex min-h-0 flex-1 pl-[14px]">
			<div className="min-w-0 flex-1"><ResultsTable /></div>
			<ContextMenu />
			<DisplaySettings />
		</div>
		<Items />
	</section>
);

/* ---------- viewport ---------- */

const Scene = () => (
	<svg className="h-full w-full" aria-label="Beams and ducts">
		<defs>
			<clipPath id="column-cut">
				<ellipse cx="722" cy="823" rx="56" ry="53" />
				<path d="M667 823 676 1070C680 1045 695 1032 707 1028L704 870Z" />
			</clipPath>
		</defs>
		<g transform="matrix(1.148 0 0 0.574 -27 461)">
			<path d="M408 467 472 424 775 687 709 745Z" fill="#30c628" />
			<path d="M20 109 709 742 1432 98 1455 108 1476 123 1494 128 1523 142 738 906 704 872 668 836 20 204Z" fill="#c63031" />
			<path d="M20 204 667 836 676 1094 645 1062 644 1020 602 975 500 866 20 349Z" fill="#f13b3b" />
			<path d="M738 906 1523 142 1508 333 743 1167Z" fill="#e63939" />
			{/* cylindrical notch where the column passes through */}
			<g clipPath="url(#column-cut)">
				<path d="M660 760h125v320H660Z" fill="#ff4a4a" />
				<path d="M660 760h16l4 160 2 160h-22Z" fill="#6b1d1d" />
				<path d="M672 760h13l6 320h-11Z" fill="#a42a2a" />
				<path d="M684 760h9l6 320h-9Z" fill="#d93737" />
				<path d="M693 760h11l5 320h-11Z" fill="#f84343" />
				<path d="M755 760h9v120h-9Z" fill="#f04040" />
				<path d="M764 760h8v120h-8Z" fill="#d03535" />
				<path d="M772 760h8v120h-8Z" fill="#7d2222" />
			</g>
			<path d="M704 872 738 906 743 1167 710 1131Z" fill="#f13b3b" />
			<path d="M704 872 738 906 764 880 764 862Q740 878 704 874Z" fill="#c63031" />
			<path d="M272 1063 559 814 600 856 303 1122Z" fill="#30c628" />
			<path d="M303 1122 600 856 605 971 314 1245Z" fill="#3ae82f" />
			<path d="M20 733 303 1105 201 1194 20 935Z" fill="#c63031" />
			<path d="M20 935 201 1194 225 1431 186 1371 90 1220 20 1112Z" fill="#f13b3b" />
			<path d="M201 1194 303 1105 322 1335 225 1431Z" fill="#e63939" />
			<path d="M20 1281 135 1181 174 1240 20 1375Z" fill="#30c628" />
			<path d="M20 1375 174 1240 187 1367 20 1523Z" fill="#3ae82f" />
			<path d="M834 885 912 806 979 864 901 948Z" fill="#30c628" />
			<path d="M834 885 901 948 901 1098 835 1033Z" fill="#3cf530" />
			<path d="M979 864 978 1010 901 1098 901 948Z" fill="#3ae82f" />
		</g>
	</svg>
);

const ViewCube = () => (
	<svg viewBox="0 0 244 185" className="absolute top-10 right-0 h-[185px] w-[244px]">
		<path d="M27 125a97 53 0 1 0 194 0a97 53 0 1 0-194 0ZM48 125a76 38 0 1 1 152 0a76 38 0 1 1-152 0Z" fill="#989898" fillRule="evenodd" stroke="#868686" strokeWidth="1.5" />
		<path d="M62 118 126 146 188 116 126 90Z" fill="#7b7b7b" />
		<g fill="#a8a8a8" stroke="#858585" strokeWidth="0.6" fontSize="22" fontWeight="700" textAnchor="middle">
			<text transform="matrix(0.9 0.3 -0.5 0.7 60 94)">W</text>
			<text transform="matrix(0.9 -0.3 0.5 0.7 184 94)">N</text>
			<text transform="matrix(0.9 -0.3 -0.5 0.8 60 165)">S</text>
			<text transform="matrix(0.9 0.3 -0.5 0.8 190 161)">E</text>
		</g>
		<path d="M72 51 122 29.5 175 49 126 72.5Z" fill="#a0a0a0" />
		<path d="M72 51 126 72.5V138.5L75 112Z" fill="#9b9b9b" />
		<path d="M175 49 126 72.5V138.5L172 111Z" fill="#979797" />
		<path d="M72 51 122 29.5 175 49 172 111 126 138.5 75 112Z" fill="none" stroke="#8a8a8a" strokeWidth="1.5" />
		<path d="M72 51 126 72.5 175 49M126 72.5V138" fill="none" stroke="#808080" strokeWidth="1.5" strokeDasharray="10 4" />
		<g fill="#80858c" fontSize="14" fontWeight="700" textAnchor="middle">
			<text transform="matrix(0.8 0.34 0 1 99 100)">BACK</text>
			<text transform="matrix(0.8 -0.38 0 1 151 98)">LEFT</text>
			<text transform="matrix(-0.8 0.2 -0.6 -0.6 121 45)">TOP</text>
		</g>
	</svg>
);

const NavBar = () => (
	<div className="absolute top-[256px] right-0 flex h-[420px] w-[50px] flex-col items-center rounded-md border-2 border-[#7e7e7e] bg-[#a2a2a2]/70">
		<svg viewBox="0 0 47 414" className="h-full w-full" fill="#b5b5b5" stroke="#858585" strokeWidth="1.8">
			<circle cx="38" cy="7" r="5" fill="none" /><path d="m36 5 4 4m0-4-4 4" />
			<path d="M8 42c0-11 7-16 16-16h14v15c0 10-6 17-15 17S8 51 8 42Z" /><circle cx="23" cy="42" r="8" fill="#a5a5a5" />
			<path d="m13 115-7-12 5-2 4 5-2-14h4l3 11V89h4l1 14 4-12 3 2-2 13 5-6 3 2-7 15-4 5H18Z" />
			<path d="M6 131h24v24H6Z" fill="none" /><circle cx="29" cy="154" r="7" /><path d="m34 159 6 6" strokeWidth="4" />
			<ellipse cx="23" cy="205" rx="15" ry="6" fill="none" /><ellipse cx="23" cy="205" rx="5" ry="15" fill="none" />
			<ellipse cx="23" cy="258" rx="12" ry="11" /><circle cx="23" cy="258" r="6" fill="#8f9c70" /><circle cx="23" cy="258" r="2" fill="#555" /><path d="M7 265q-3 8 7 11M39 265q3 8-7 11" fill="none" />
			<ellipse cx="16" cy="308" rx="5" ry="7" /><ellipse cx="31" cy="318" rx="5" ry="7" /><ellipse cx="16" cy="320" rx="4" ry="2" /><ellipse cx="31" cy="331" rx="4" ry="2" />
			<path d="M13 358v33l7-6 7 14 5-3-7-13h9Z" />
			<path d="M19 72h8l-4 4ZM19 176h8l-4 4ZM19 232h8l-4 4ZM19 288h8l-4 4ZM19 344h8l-4 4Z" fill="#777" stroke="none" />
			<circle cx="38" cy="407" r="5" fill="none" /><path d="M35 406h6l-3 3Z" />
		</svg>
	</div>
);

const Viewport = () => (
	<main className="relative ml-[5px] min-w-0 flex-1 overflow-hidden bg-linear-to-b from-[#808080] to-[#c0c0c0]">
		<Scene />
		<ViewCube />
		<NavBar />
		<div className="absolute bottom-[34px] left-[35px] flex flex-col items-start gap-2.5 text-xl text-white">
			<p className="flex h-[33px] items-center border-2 border-[#949494] bg-[#b5b5b5] px-1">G(1)-2(2) : 01 - Entry Level (7)</p>
			<p className="flex h-[30px] items-center border-2 border-[#949494] bg-[#b5b5b5] px-1 whitespace-pre">X: 12.701 m  Y: 18.459 m  Z: 7.298 m</p>
		</div>
	</main>
);

/* ---------- issues ---------- */

const fieldBox = 'col-start-1 row-start-1 h-[54px] w-full rounded-sm border-2 border-[#cfcfcf] bg-white text-[21px] placeholder:text-[#a0a0a0]';

const Field = ({ id, label, children }: { id: string; label: string; children: ReactNode }) => (
	<div>
		<label htmlFor={id} className="mb-[11px] block text-base leading-6 text-[#6a6a6a]">{label}</label>
		<div className="grid items-center">{children}</div>
	</div>
);

const SelectField = ({ id, label, value, pad, soft, badge }: { id: string; label: string; value: string; pad: string; soft?: boolean; badge?: string }) => (
	<Field id={id} label={label}>
		<select id={id} className={clsx(fieldBox, 'appearance-none', pad, soft && 'text-[#5a5a5a]')}><option>{value}</option></select>
		{badge && <span className="pointer-events-none col-start-1 row-start-1 ml-7 flex h-8 w-8 items-center justify-center rounded-full bg-[#faa21b] text-[13px] font-medium">{badge}</span>}
		<Chevron className={clsx('pointer-events-none col-start-1 row-start-1 h-3 w-5 justify-self-end', soft ? 'mr-8 text-[#777]' : 'mr-[18px]')} />
	</Field>
);

const Issues = () => {
	const [pushpins, setPushpins] = useState(true);

	return (
		<section className="ml-1 flex w-[684px] shrink-0 flex-col border-l border-[#5f5f5f] bg-white text-[#3c3c3c]">
			<PanelTitle>Issues</PanelTitle>
			<div className="flex h-[88px] items-center border-b-2 border-[#e6ecec] pr-5 pl-[22px] text-[21px] text-[#6a6a6a]">
				<label htmlFor="pushpins">Display pushpins</label>
				<input
					id="pushpins"
					type="checkbox"
					role="switch"
					checked={pushpins}
					onChange={() => setPushpins(!pushpins)}
					className="ml-2 h-[26px] w-[69px] appearance-none rounded-full bg-[#bdbdbd] p-[3px] before:block before:h-5 before:w-5 before:rounded-full before:bg-white checked:bg-[#0696d7] checked:before:ml-auto"
				/>
				<button aria-label="Menu" className="ml-auto flex w-[27px] flex-col gap-[5px]">
					<span className="h-0.5 bg-[#808080]" /><span className="h-0.5 bg-[#808080]" /><span className="h-0.5 bg-[#808080]" /><span className="h-0.5 bg-[#808080]" />
				</button>
			</div>
			<div className="flex h-[87px] items-center justify-between border-b-2 border-[#dcdcdc] pr-7 pl-[25px]">
				<h2 className="text-[29px]">Create 18 issues</h2>
				<button aria-label="Close form" className="text-[#777]"><Cross className="h-5 w-5" /></button>
			</div>
			<form className="border-b-2 border-[#dcdcdc] pt-[26px]" onSubmit={(e) => e.preventDefault()}>
				<div className="flex flex-col gap-[25px] pr-8 pl-9">
					<Field id="title" label="Title prefix">
						<input id="title" placeholder="Enter a title" className={clsx(fieldBox, 'px-[19px]')} />
					</Field>
					<SelectField id="type" label="Type" value="Coordination > Clash" pad="pl-[72px]" badge="CL" />
					<Field id="description" label="Description">
						<textarea
							id="description"
							defaultValue="Review and lower Supply Air system to avoid structural framing"
							className="mb-2.5 h-[104px] w-full resize-none rounded-sm border-2 border-[#cfcfcf] bg-white px-[19px] py-2.5 text-[21px] leading-[30px]"
						/>
					</Field>
					<SelectField id="assigned" label="Assigned to" value="ValuVent Engineering" pad="pl-6" />
					<SelectField id="location" label="Location" value="Level 0 - entry level" pad="pl-[19px]" soft />
					<Field id="details" label="Location details">
						<input id="details" placeholder="Enter location details" className={clsx(fieldBox, 'px-[19px]')} />
					</Field>
					<Field id="due" label="Due date">
						<input id="due" placeholder="Select date" className={clsx(fieldBox, 'pl-[66px]')} />
						<svg viewBox="0 0 20 22" className="pointer-events-none col-start-1 row-start-1 ml-[25px] h-[22px] w-5" fill="none" stroke="#6a6a6a" strokeWidth="2">
							<rect x="1" y="3" width="18" height="18" rx="2" />
							<path d="M1 5h18" strokeWidth="5" />
							<path d="M5 0v4M10 0v4M15 0v4" />
						</svg>
					</Field>
					<SelectField id="root-cause" label="Root cause" value="Coordination > Design Coordination" pad="pl-6" />
				</div>
				<div className="mx-[22px] mt-6 border-t-2 border-[#e6e6e6]" />
				<div className="flex items-center justify-end gap-12 py-[22px] pr-8 text-[21px]">
					<button type="button" className="text-[#0f73b8]">Cancel</button>
					<button type="submit" className="h-[55px] w-28 rounded-sm bg-[#0696d7] font-medium text-white">Create</button>
				</div>
			</form>
		</section>
	);
};

/* ---------- status bar ---------- */

const Meter = ({ label, fill, children }: { label: string; fill: string; children: ReactNode }) => (
	<div role="img" aria-label={label} className="flex w-[46px] flex-col gap-px">
		<svg viewBox="0 0 24 14" className="h-3.5 w-6" fill="none" stroke="#111" strokeWidth="1.5">{children}</svg>
		<span className="block h-[11px] border-2 border-black bg-[#d6d6d6]"><span className={clsx('block h-full bg-[#0000f5]', fill)} /></span>
	</div>
);

const StatusBar = () => (
	<footer className="flex h-[34px] shrink-0 items-center border-t border-[#6a6a6a] bg-[#9f9f9f] pr-0.5 pl-3 text-base text-[#1c1c1c]">
		<p className="flex-1 pt-2">Ready</p>
		<div className="flex items-center pt-2">
			<svg viewBox="0 0 48 22" className="h-[22px] w-12" fill="#b3b3b3" stroke="#8b8b8b"><path d="M12 1v20L1 11ZM18 1h6v20h-6ZM46 1v20L33 11Z" /></svg>
			<span className="w-[92px] text-center">1 of 1</span>
			<svg viewBox="0 0 50 22" className="h-[22px] w-[50px]" fill="#b3b3b3" stroke="#8b8b8b"><path d="M2 1v20l13-10ZM25 1h6v20h-6ZM37 1v20l12-10Z" /></svg>
			<svg viewBox="0 0 24 22" className="ml-0.5 h-[22px] w-6"><path d="M1 1h22v20H1Z" fill="#eef1f4" stroke="#5b6470" strokeWidth="1.5" /><path d="M1 1h22v4H1Z" fill="#5b6470" /><path d="M4 9h4v3H4ZM4 15h4v3H4ZM10 10h11M10 16h11" fill="none" stroke="#6d7682" /></svg>
		</div>
		<Separator className="mr-[18px] ml-3.5 h-7" />
		<div className="flex items-center gap-1.5">
			<Meter label="Pencil progress" fill="w-full"><path d="M1 4h14v6H1Z" /><path d="M1 4h4v6H1Z" fill="#c01818" /><path d="M15 4v6l5-3Z" fill="#e8d52a" /></Meter>
			<Meter label="Disk progress" fill="w-4/5"><path d="M2 4v7c0 3 10 3 10 0V4" /><ellipse cx="7" cy="4" rx="5" ry="2.5" /></Meter>
			<Meter label="Web server progress" fill="w-full"><path d="M2 3h18M11 3v9M11 3 4 11M11 3l7 8M1 1h3v3H1ZM18 1h3v3h-3ZM10 10h3v3h-3Z" /></Meter>
		</div>
		<span className="ml-2 pt-2 text-[13px]">2049 MB</span>
	</footer>
);

const App = () => (
	<div className="flex h-screen flex-col overflow-hidden bg-[#9f9f9f] font-['Noto_Sans',sans-serif]">
		<TitleBar />
		<MenuTabs />
		<Ribbon />
		<div className="flex min-h-0 flex-1 border-t border-[#e4e4e4] pt-[5px]">
			<ClashDetective />
			<Viewport />
			<Issues />
		</div>
		<StatusBar />
	</div>
);

export default App;
